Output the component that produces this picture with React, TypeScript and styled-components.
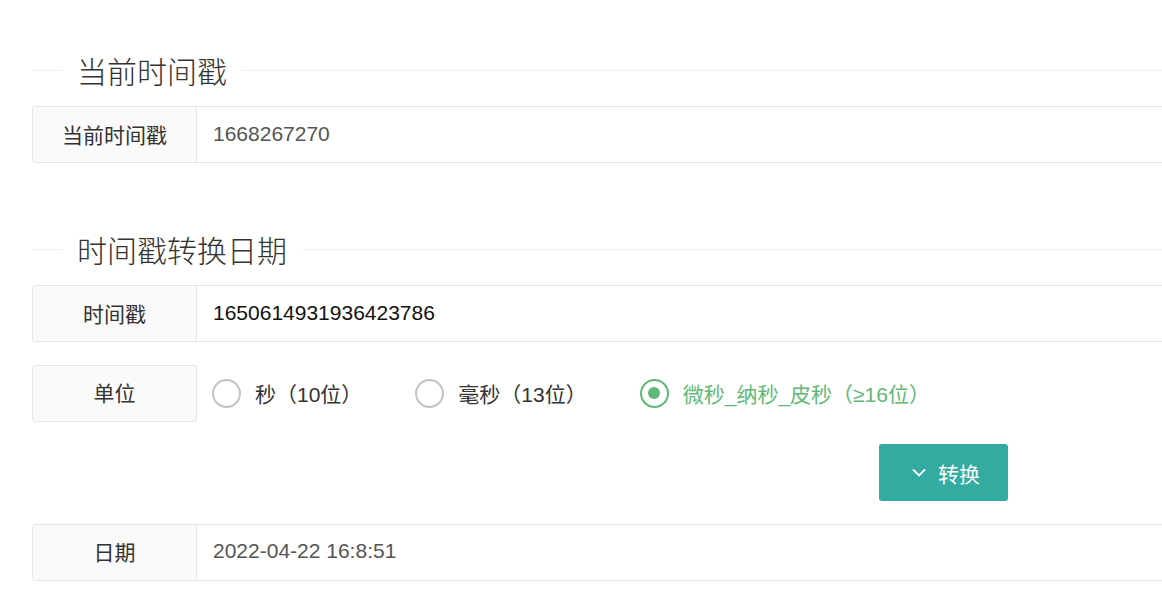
import React, { useState } from "react";
import styled, { createGlobalStyle } from "styled-components";

const Global = createGlobalStyle`
  html, body { margin: 0; padding: 0; background: #fff; overflow: hidden; }
  body {
    font-family: "Liberation Sans", "Noto Sans CJK SC", sans-serif;
    color: #333;
  }
`;

const Page = styled.div`
  width: 1220px;
  padding: 52px 0 0 32px;
  display: flex;
  flex-direction: column;
`;

const Section = styled.section<{ $gapTop?: number }>`
  display: flex;
  flex-direction: column;
  margin-top: ${(p) => p.$gapTop ?? 0}px;
`;

const TitleRow = styled.div`
  display: flex;
  align-items: center;
  height: 36px;
  margin-bottom: 18px;
`;

const TitleLine = styled.div<{ $w?: number }>`
  height: 1px;
  background: #eeeeee;
  ${(p) => (p.$w ? `width: ${p.$w}px;` : "flex: 1;")}
`;

const Legend = styled.div`
  padding: 0 15px;
  font-size: 30px;
  font-weight: 300;
  line-height: 36px;
  color: #333;
  font-family: "Noto Sans CJK SC", sans-serif;
`;

const Items = styled.div`
  display: flex;
  flex-direction: column;
  gap: 22.5px;
`;

const Row = styled.div`
  display: flex;
  height: 57px;
  box-sizing: border-box;
  border: 1px solid #e6e6e6;
  border-radius: 3px;
  overflow: hidden;
`;

const Label = styled.div`
  width: 163px;
  flex: none;
  background: #fafafa;
  border-right: 1px solid #e6e6e6;
  display: flex;
  align-items: center;
  justify-content: center;
  padding-bottom: 2px;
  font-size: 21px;
  color: #333;
`;

const Value = styled.div<{ $dark?: boolean }>`
  flex: 1;
  display: flex;
  align-items: center;
  padding: 0 0 2px 16px;
  font-size: 21px;
  color: ${(p) => (p.$dark ? "#111" : "#555")};
`;

const RadioRow = styled.div`
  display: flex;
  height: 57px;
  align-items: center;
`;

const BoxLabel = styled(Label)`
  height: 57px;
  width: 165px;
  box-sizing: border-box;
  border: 1px solid #e6e6e6;
  border-radius: 3px;
`;

const RadioGroup = styled.div`
  display: flex;
  align-items: center;
  padding-left: 15px;
  gap: 53px;
`;

const RadioItem = styled.label<{ $on: boolean }>`
  display: flex;
  align-items: center;
  gap: 14px;
  font-size: 21px;
  cursor: pointer;
  color: ${(p) => (p.$on ? "#5FB878" : "#333")};
`;

const Circle = styled.span<{ $on: boolean }>`
  width: 29px;
  height: 29px;
  box-sizing: border-box;
  border-radius: 50%;
  border: 2px solid ${(p) => (p.$on ? "#5FB878" : "#c2c2c2")};
  display: flex;
  align-items: center;
  justify-content: center;
  &::after {
    content: "";
    width: 12px;
    height: 12px;
    border-radius: 50%;
    background: #5FB878;
    display: ${(p) => (p.$on ? "block" : "none")};
  }
`;

const ButtonRow = styled.div`
  display: flex;
  height: 57px;
  padding-left: 847px;
`;

const Button = styled.button`
  height: 57px;
  width: 129px;
  box-sizing: border-box;
  border: none;
  border-radius: 3px;
  background: #33aba0;
  color: #fff;
  font-size: 21px;
  font-family: "Noto Sans CJK SC", sans-serif;
  display: flex;
  align-items: center;
  padding: 0 0 0 33px;
  gap: 12px;
  cursor: pointer;
`;

const options = ["秒（10位）", "毫秒（13位）", "微秒_纳秒_皮秒（≥16位）"];

export default function App() {
  const [sel, setSel] = useState(2);
  return (
    <>
      <Global />
      <Page>
        <Section>
          <TitleRow>
            <TitleLine $w={30} />
            <Legend>当前时间戳</Legend>
            <TitleLine />
          </TitleRow>
          <Items>
            <Row>
              <Label>当前时间戳</Label>
              <Value>1668267270</Value>
            </Row>
          </Items>
        </Section>
        <Section $gapTop={68}>
          <TitleRow>
            <TitleLine $w={30} />
            <Legend>时间戳转换日期</Legend>
            <TitleLine />
          </TitleRow>
          <Items>
            <Row>
              <Label>时间戳</Label>
              <Value $dark>1650614931936423786</Value>
            </Row>
            <RadioRow>
              <BoxLabel>单位</BoxLabel>
              <RadioGroup>
                {options.map((o, i) => (
                  <RadioItem key={o} $on={sel === i} onClick={() => setSel(i)}>
                    <Circle $on={sel === i} />
                    {o}
                  </RadioItem>
                ))}
              </RadioGroup>
            </RadioRow>
            <ButtonRow>
              <Button>
                <svg width="14" height="9" viewBox="0 0 14 9" fill="none">
                  <path d="M1 1.5 L7 7.5 L13 1.5" stroke="#fff" strokeWidth="1.8" />
                </svg>
                转换
              </Button>
            </ButtonRow>
            <Row>
              <Label>日期</Label>
              <Value>2022-04-22 16:8:51</Value>
            </Row>
          </Items>
        </Section>
      </Page>
    </>
  );
}
